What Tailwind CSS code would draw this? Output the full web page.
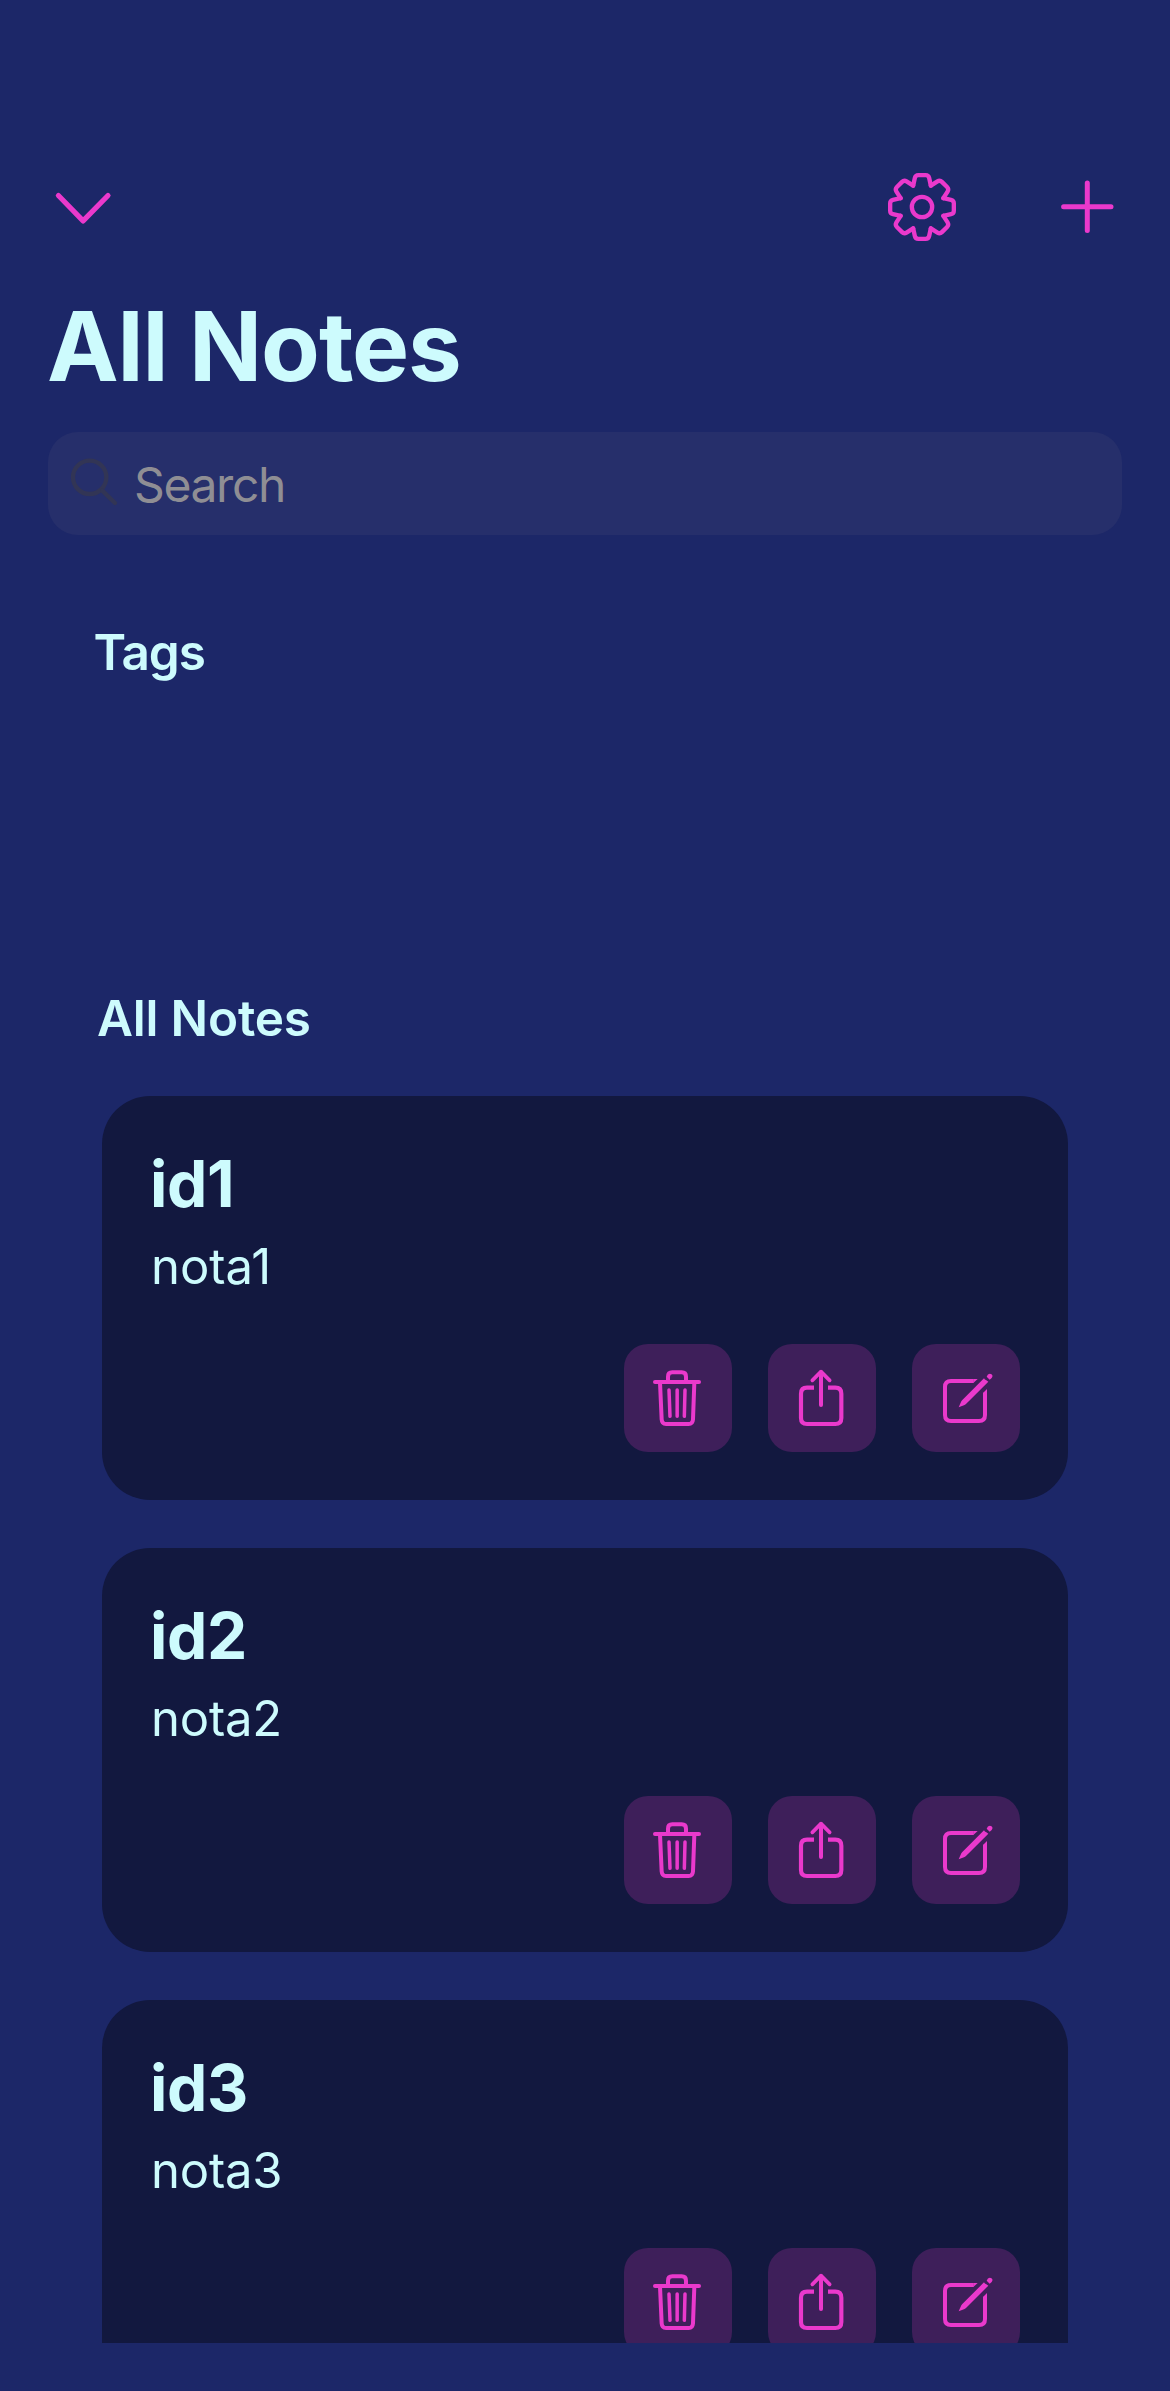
<!DOCTYPE html>
<html lang="en">
<head>
<meta charset="utf-8">
<title>All Notes</title>
<script src="https://cdn.jsdelivr.net/npm/@tailwindcss/browser@4"></script>
</head>
<body class="bg-[#1c2768] text-[#cdfbfd] font-['Inter',sans-serif]">
<svg class="hidden" xmlns="http://www.w3.org/2000/svg">
  <symbol id="trash" viewBox="42 42 324 324">
    <g fill="none" stroke="currentColor" stroke-linecap="round" stroke-linejoin="round">
      <path stroke-width="12" d="M135 156H267"/>
      <path stroke-width="12" d="M174 154V140Q174 127 187 127H215Q228 127 228 140V154"/>
      <path stroke-width="12" d="M150 158L155 268Q156 282 168 282H236Q248 282 249 268L253 158"/>
      <path stroke-width="10.500" d="M177 180L180 259M201.500 180V259M225 180L223 259"/>
    </g>
  </symbol>
  <symbol id="share" viewBox="54 42 324 324">
    <g fill="none" stroke="currentColor">
      <path stroke-width="12.500" d="M192 173H171Q153 173 153 191V264Q153 282 171 282H256Q274 282 274 264V191Q274 173 256 173H234"/>
      <path stroke-width="12" stroke-linecap="round" d="M213 127V225"/>
      <path stroke-width="11" stroke-linecap="round" stroke-linejoin="round" d="M187 151L213 125L239 151"/>
    </g>
  </symbol>
  <symbol id="edit" viewBox="486 42 324 324">
    <path fill="none" stroke="currentColor" stroke-width="12" d="M671 153H603Q585 153 585 171V255Q585 273 603 273H687Q705 273 705 255V188"/>
    <path fill="currentColor" d="M670 147H683L670 159ZM699 189L711 177V190H699ZM626 232L633 216Q634 213 637 210L702 145Q704 150 709 151L715 155L648 222Q645 225 642 226Z"/>
    <path fill="currentColor" d="M710 140Q713 131 719 131Q727.500 131.500 727.500 139Q727 145 719 149Z"/>
  </symbol>
</svg>

<main class="h-[2391px] w-[1170px] overflow-hidden flex flex-col pb-12">
  <header class="shrink-0 pt-[157px] px-[33px] flex items-center">
    <svg class="w-[100px] h-[100px] block" viewBox="0 0 100 100" fill="none" stroke="#ea39cc" stroke-width="5.200" stroke-linecap="round" stroke-linejoin="round"><path d="M25.400 38.500L50.100 63.900L75 38.500"/></svg>
    <svg class="w-[100px] h-[100px] block ml-auto" viewBox="-150 -150 300 300" fill="none" stroke="#ea39cc" stroke-width="13" stroke-linecap="round" stroke-linejoin="round">
      <path id="t" d="M-26.500 -64L-21.500 -87Q-19.500 -95.500 -11 -95.500H11Q19.500 -95.500 21.500 -87L26.500 -64"/>
      <use href="#t" transform="rotate(45)"/><use href="#t" transform="rotate(90)"/><use href="#t" transform="rotate(135)"/><use href="#t" transform="rotate(180)"/><use href="#t" transform="rotate(225)"/><use href="#t" transform="rotate(270)"/><use href="#t" transform="rotate(315)"/>
      <circle r="30.500"/>
    </svg>
    <svg class="w-[100px] h-[100px] block ml-[65px]" viewBox="0 0 100 100" fill="none" stroke="#ea39cc" stroke-width="5" stroke-linecap="round"><path d="M26.600 49.700H74M50.300 26V73.500"/></svg>
  </header>

  <h1 class="shrink-0 mt-[39px] ml-[47px] text-[96px] leading-[100px] font-bold tracking-[-1.1px]">All Notes</h1>

  <div class="shrink-0 mt-9 mx-12 h-[103px] rounded-[30px] bg-[#262f6b] flex items-center">
    <svg class="w-[86px] h-[103px] block" viewBox="54 426 258 309" fill="none" stroke="#323555" stroke-width="13" stroke-linecap="round"><circle cx="179" cy="562" r="50"/><path d="M217 602L255 639"/></svg>
    <span class="text-[48px] leading-[60px] mt-[3px] tracking-[-1.4px] text-[#8f8e94]">Search</span>
  </div>

  <h2 class="shrink-0 mt-[87px] ml-[93.5px] text-[49.5px] leading-[60px] font-semibold tracking-[-1.1px]">Tags</h2>
  <h2 class="shrink-0 mt-[306px] ml-[97px] text-[49.5px] leading-[60px] font-semibold tracking-[-0.2px]">All Notes</h2>

  <section class="mt-12 mx-[102px] flex-1 min-h-0 overflow-hidden flex flex-col gap-12">
    <article class="shrink-0 h-[404px] rounded-[48px] bg-[#12183f] p-12 flex flex-col">
      <h3 class="text-[64px] leading-[80px] font-bold tracking-[-0.3px]">id1</h3>
      <p class="mt-[13px] ml-px text-[49px] leading-[60px]">nota1</p>
      <div class="mt-[47px] flex justify-end gap-9 text-[#ea39cc]">
        <button class="size-[108px] rounded-3xl bg-[#3e1f5a]"><svg class="size-[108px]"><use href="#trash"/></svg></button>
        <button class="size-[108px] rounded-3xl bg-[#3e1f5a]"><svg class="size-[108px]"><use href="#share"/></svg></button>
        <button class="size-[108px] rounded-3xl bg-[#3e1f5a]"><svg class="size-[108px]"><use href="#edit"/></svg></button>
      </div>
    </article>
    <article class="shrink-0 h-[404px] rounded-[48px] bg-[#12183f] p-12 flex flex-col">
      <h3 class="text-[64px] leading-[80px] font-bold tracking-[-0.3px]">id2</h3>
      <p class="mt-[13px] ml-px text-[49px] leading-[60px] tracking-[-0.2px]">nota2</p>
      <div class="mt-[47px] flex justify-end gap-9 text-[#ea39cc]">
        <button class="size-[108px] rounded-3xl bg-[#3e1f5a]"><svg class="size-[108px]"><use href="#trash"/></svg></button>
        <button class="size-[108px] rounded-3xl bg-[#3e1f5a]"><svg class="size-[108px]"><use href="#share"/></svg></button>
        <button class="size-[108px] rounded-3xl bg-[#3e1f5a]"><svg class="size-[108px]"><use href="#edit"/></svg></button>
      </div>
    </article>
    <article class="shrink-0 h-[404px] rounded-[48px] bg-[#12183f] p-12 flex flex-col">
      <h3 class="text-[64px] leading-[80px] font-bold tracking-[-0.3px]">id3</h3>
      <p class="mt-[13px] ml-px text-[49px] leading-[60px] tracking-[-0.2px]">nota3</p>
      <div class="mt-[47px] flex justify-end gap-9 text-[#ea39cc]">
        <button class="size-[108px] rounded-3xl bg-[#3e1f5a]"><svg class="size-[108px]"><use href="#trash"/></svg></button>
        <button class="size-[108px] rounded-3xl bg-[#3e1f5a]"><svg class="size-[108px]"><use href="#share"/></svg></button>
        <button class="size-[108px] rounded-3xl bg-[#3e1f5a]"><svg class="size-[108px]"><use href="#edit"/></svg></button>
      </div>
    </article>
  </section>
</main>
</body>
</html>
